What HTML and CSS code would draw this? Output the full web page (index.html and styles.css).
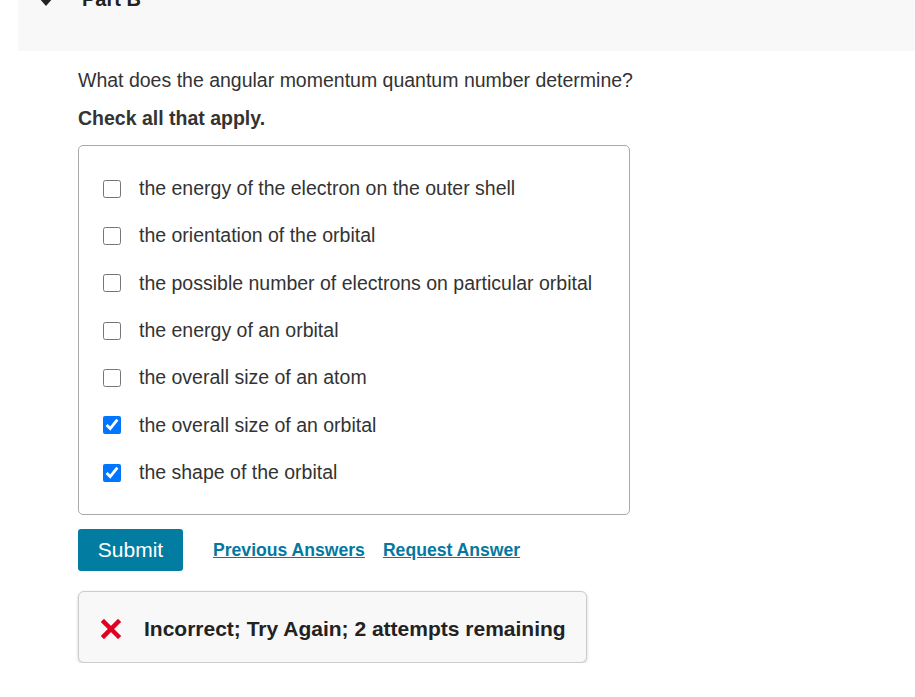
FILE: index.html
```html
<!DOCTYPE html>
<html lang="en">
<head>
    <meta charset="UTF-8">
    <title>Part B</title>
    <link rel="stylesheet" href="styles.css">
</head>
<body>
    <div class="part">
        <div class="part-header">
            <span class="caret"></span>
            <h2>Part B</h2>
        </div>

        <div class="part-body">
            <p class="question">What does the angular momentum quantum number determine?</p>
            <p class="instructions">Check all that apply.</p>

            <div class="choices">
                <label class="choice"><input type="checkbox"> <span>the energy of the electron on the outer shell</span></label>
                <label class="choice"><input type="checkbox"> <span>the orientation of the orbital</span></label>
                <label class="choice"><input type="checkbox"> <span>the possible number of electrons on particular orbital</span></label>
                <label class="choice"><input type="checkbox"> <span>the energy of an orbital</span></label>
                <label class="choice"><input type="checkbox"> <span>the overall size of an atom</span></label>
                <label class="choice"><input type="checkbox" checked> <span>the overall size of an orbital</span></label>
                <label class="choice"><input type="checkbox" checked> <span>the shape of the orbital</span></label>
            </div>

            <div class="actions">
                <button class="submit">Submit</button>
                <a href="#" class="action-link">Previous Answers</a>
                <a href="#" class="action-link">Request Answer</a>
            </div>

            <div class="feedback">
                <svg class="x-icon" width="20" height="20" viewBox="0 0 20 20">
                    <path d="M3 3 L17 17 M17 3 L3 17" stroke="#e1001f" stroke-width="4.5" stroke-linecap="square"/>
                </svg>
                <span>Incorrect; Try Again; 2 attempts remaining</span>
            </div>
        </div>
    </div>
</body>
</html>
```

FILE: styles.css
```css
* {
    margin: 0;
    padding: 0;
    box-sizing: border-box;
}

body {
    font-family: Arial, 'Liberation Sans', sans-serif;
    color: #333;
    background: #fff;
}

.part {
    margin-left: 18px;
}

.part-header {
    background: #f8f8f8;
    height: 51px;
    display: flex;
    align-items: flex-start;
    overflow: hidden;
}

.caret {
    width: 0;
    height: 0;
    margin: -2px 0 0 21px;
    border-left: 7px solid transparent;
    border-right: 7px solid transparent;
    border-top: 8px solid #222;
}

.part-header h2 {
    margin: -13px 0 0 29px;
    font-size: 20px;
    font-weight: bold;
    line-height: 24px;
    color: #222;
}

.part-body {
    padding: 17px 0 0 60px;
}

.question {
    font-size: 19.5px;
    line-height: 24px;
}

.instructions {
    margin-top: 14px;
    font-size: 19.5px;
    font-weight: bold;
    line-height: 24px;
}

.choices {
    margin-top: 15px;
    width: 552px;
    border: 1px solid #aaa;
    border-radius: 5px;
    padding: 19px 0 18px 24px;
}

.choice {
    display: flex;
    align-items: center;
    height: 47.33px;
    font-size: 19.5px;
}

.choice input {
    width: 18px;
    height: 18px;
    margin: 0 18px 0 0;
}

.actions {
    margin-top: 14px;
    display: flex;
    align-items: center;
}

.submit {
    width: 105px;
    height: 42px;
    background: #027ca0;
    color: white;
    border: none;
    border-radius: 3px;
    font-family: inherit;
    font-size: 21px;
    cursor: pointer;
}

.action-link {
    margin-left: 30px;
    color: #0478a0;
    font-size: 17.6px;
    font-weight: bold;
}

.action-link + .action-link {
    margin-left: 18px;
}

.feedback {
    margin-top: 20px;
    width: 509px;
    height: 72px;
    display: flex;
    align-items: center;
    padding: 4px 0 0 22px;
    background: #f8f8f8;
    border: 1px solid #ccc;
    border-radius: 6px;
    box-shadow: 0 1px 3px rgba(0, 0, 0, 0.2);
    font-size: 21px;
    font-weight: bold;
    color: #222;
}

.x-icon {
    margin-right: 23px;
}
```
